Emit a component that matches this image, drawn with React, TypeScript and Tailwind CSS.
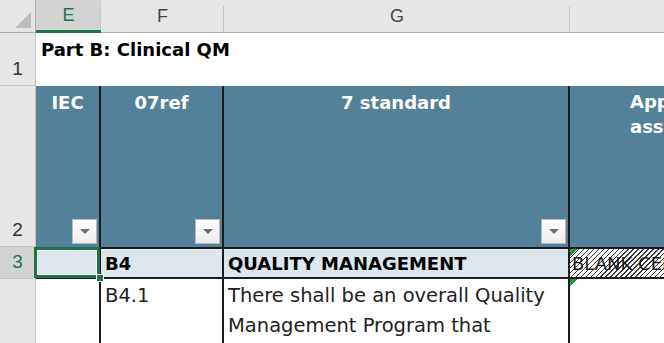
import { ReactNode } from "react";

const gothic = "font-['DejaVu_Sans',sans-serif]";
const calibri = "font-['Liberation_Sans',Arial,sans-serif]";

const FilterButton = () => (
  <div className="absolute right-[2px] bottom-[3px] w-[25px] h-[25px] border border-[#b9b9b9] bg-gradient-to-b from-white to-[#ececec] flex items-center justify-center">
    <div className="w-0 h-0 border-l-[5px] border-r-[5px] border-t-[5px] border-l-transparent border-r-transparent border-t-[#6f6f6f]" />
  </div>
);

const ColHead = ({ label, selected, last }: { label: string; selected?: boolean; last?: boolean }) => (
  <div
    className={
      "relative flex items-center justify-center border-b border-[#ababab] text-[18px] " +
      calibri +
      (selected ? " bg-[#d3d3d3] text-[#217346] border-b-[3px] border-b-[#217346]" : " bg-[#e6e6e6] text-[#444]")
    }
  >
    {label}
    {!last && <div className="absolute right-0 top-[6px] bottom-0 w-px bg-[#c6c6c6]" />}
  </div>
);

const RowHead = ({ n, selected, children }: { n?: string; selected?: boolean; children?: ReactNode }) => (
  <div
    className={
      "flex items-end justify-center pb-[2px] border-r border-b border-[#c4c4c4] text-[19px] " +
      calibri +
      (selected ? " bg-[#d3d3d3] text-[#217346]" : " bg-[#e6e6e6] text-[#333]")
    }
  >
    {n}
    {children}
  </div>
);

const headCell = "relative bg-[#53819a] border-r-2 border-[#1b1b1b] text-center pt-[3px] text-[18px] font-bold text-white " + gothic;
const boldCell = "bg-[#dce6ec] border-t-2 border-r-2 border-b-2 border-[#1b1b1b] pl-[4px] pt-[1px] text-[18px] font-bold text-black " + gothic;
const bodyCell = "bg-white border-r-2 border-[#1b1b1b] pl-[4px] pt-[2px] text-[19.5px] leading-[30px] text-[#222] " + gothic;

export default function App() {
  return (
    <div className="w-[664px] h-[343px] overflow-hidden bg-white">
      <div className="grid grid-cols-[36px_65px_123px_346px_200px] grid-rows-[33px_53px_161px_32px_70px]">
        {/* column letters */}
        <div className="relative bg-[#e6e6e6] border-r border-b border-[#ababab]">
          <div className="absolute right-[4px] bottom-[4px] w-0 h-0 border-l-[16px] border-l-transparent border-b-[16px] border-b-[#bdbdbd]" />
        </div>
        <ColHead label="E" selected />
        <ColHead label="F" />
        <ColHead label="G" />
        <ColHead label="" last />

        {/* row 1 */}
        <RowHead n="1" />
        <div className={"col-span-4 bg-white pl-[5px] pt-[3px] text-[18px] font-bold text-black " + gothic}>
          Part B: Clinical QM
        </div>

        {/* row 2 - table header */}
        <RowHead n="2" />
        <div className={headCell}>
          IEC
          <FilterButton />
        </div>
        <div className={headCell}>
          07ref
          <FilterButton />
        </div>
        <div className={headCell}>
          7 standard
          <FilterButton />
        </div>
        <div className={"bg-[#53819a] pl-[60px] pt-[3px] text-[18px] leading-[25px] font-bold text-white whitespace-nowrap " + gothic}>
          <div>Applicable to</div>
          <div>assessment</div>
        </div>

        {/* row 3 */}
        <RowHead n="3" selected />
        <div className="relative bg-[#dce6ec] border-t-2 border-r-2 border-b-2 border-[#1b1b1b]">
          <div className="absolute -left-[2px] -top-[2px] right-[-1px] bottom-[-1px] border-[3px] border-[#217346]">
            <div className="absolute inset-0 border border-white" />
          </div>
          <div className="absolute -right-[5px] -bottom-[5px] w-[8px] h-[8px] bg-[#217346] border border-white" />
        </div>
        <div className={boldCell}>B4</div>
        <div className={boldCell}>QUALITY MANAGEMENT</div>
        <div className={"relative border-t-2 border-b-2 border-[#1b1b1b] bg-[repeating-linear-gradient(135deg,#ffffff_0px,#ffffff_2.5px,#3a3a3a_2.5px,#3a3a3a_3.5px)] pl-[2px] pt-[1px] text-[18px] text-[#1a1a1a] whitespace-nowrap overflow-hidden " + gothic}>
          <div className="absolute z-10 left-0 top-0 w-[8px] h-[8px] bg-[linear-gradient(135deg,#1e9e3a_50%,transparent_50%)]" />
          BLANK CELL
        </div>

        {/* row 4 */}
        <RowHead />
        <div className="bg-white border-r-2 border-[#1b1b1b]" />
        <div className={bodyCell}>B4.1</div>
        <div className={bodyCell}>There shall be an overall Quality Management Program that</div>
        <div className="relative bg-white">
          <div className="absolute left-0 top-0 w-[8px] h-[8px] bg-[linear-gradient(135deg,#1e9e3a_50%,transparent_50%)]" />
        </div>
      </div>
    </div>
  );
}
